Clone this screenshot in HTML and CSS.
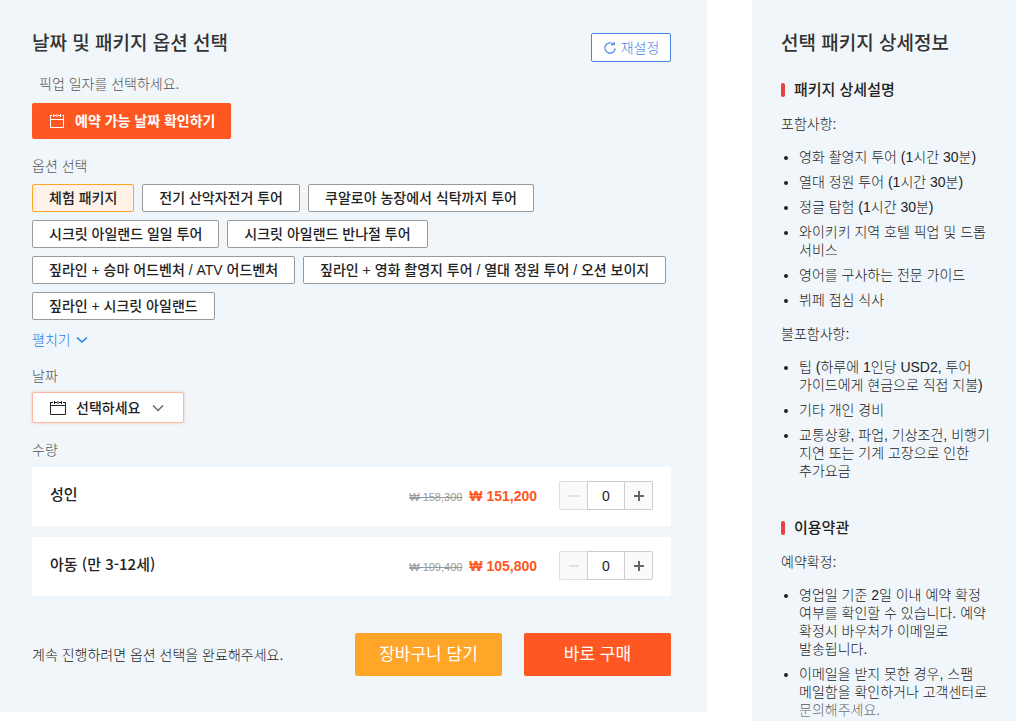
FILE: index.html
```html
<!DOCTYPE html>
<html lang="ko">
<head>
    <meta charset="UTF-8">
    <meta name="viewport" content="width=device-width, initial-scale=1.0">
    <title>날짜 및 패키지 옵션 선택</title>
    <link rel="stylesheet" href="styles.css">
</head>
<body>

    <div class="page">
        <!-- Booking options -->
        <main class="booking">
            <div class="booking-header">
                <h2 class="title">날짜 및 패키지 옵션 선택</h2>
                <button type="button" class="reset-btn">
                    <svg width="14" height="14" viewBox="0 0 14 14" fill="none" stroke="currentColor" stroke-width="1.2">
                        <path d="M10.6 3.2A5.2 5.2 0 1 0 12.2 7.4"/>
                        <path d="M8 3.6H11.2V1"/>
                    </svg>
                    재설정
                </button>
            </div>

            <p class="hint">픽업 일자를 선택하세요.</p>
            <button type="button" class="check-btn">
                <svg width="16" height="16" viewBox="0 0 16 16" fill="none" stroke="currentColor">
                    <path d="M1.5 2V14.5H14.5V2M1.5 6.5H14.5M1 2.5H3M5 2.5H7M9 2.5H11M13 2.5H15M4.5 1V4M8 1V4M11.5 1V4"/>
                </svg>
                예약 가능 날짜 확인하기
            </button>

            <h3 class="label">옵션 선택</h3>
            <div class="options">
                <button type="button" class="option selected">체험 패키지</button>
                <button type="button" class="option">전기 산악자전거 투어</button>
                <button type="button" class="option">쿠알로아 농장에서 식탁까지 투어</button>
                <button type="button" class="option">시크릿 아일랜드 일일 투어</button>
                <button type="button" class="option">시크릿 아일랜드 반나절 투어</button>
                <button type="button" class="option">짚라인 + 승마 어드벤처 / ATV 어드벤처</button>
                <button type="button" class="option">짚라인 + 영화 촬영지 투어 / 열대 정원 투어 / 오션 보이지</button>
                <button type="button" class="option">짚라인 + 시크릿 아일랜드</button>
            </div>
            <button type="button" class="expand-btn">
                펼치기
                <svg width="12" height="8" viewBox="0 0 12 8" fill="none" stroke="currentColor" stroke-width="1.6">
                    <path d="M1 1.5L6 6L11 1.5"/>
                </svg>
            </button>

            <label class="label" for="date">날짜</label>
            <div class="date-box">
                <svg width="16" height="16" viewBox="0 0 16 16" fill="none" stroke="currentColor">
                    <path d="M.5 2V14.5H15.5V2M.5 5.5H15.5M0 2.5H3M5 2.5H7M9 2.5H11M13 2.5H16M4.5 1V4M8 1V4M11.5 1V4"/>
                </svg>
                <select id="date" class="date-select">
                    <option>선택하세요</option>
                </select>
                <svg class="date-arrow" width="12" height="8" viewBox="0 0 12 8" fill="none" stroke="currentColor" stroke-width="1.5">
                    <path d="M1 1.5L6 6.5L11 1.5"/>
                </svg>
            </div>

            <h3 class="label">수량</h3>
            <div class="units">
                <div class="unit">
                    <label class="unit-name" for="adult">성인</label>
                    <div class="unit-price"><s class="old">₩ 158,300</s> <span class="price">₩ 151,200</span></div>
                    <div class="counter">
                        <button type="button" class="minus" aria-label="빼기" disabled></button>
                        <input type="text" id="adult" value="0">
                        <button type="button" class="plus" aria-label="더하기"></button>
                    </div>
                </div>
                <div class="unit">
                    <label class="unit-name" for="child">아동 (만 3-12세)</label>
                    <div class="unit-price"><s class="old">₩ 109,400</s> <span class="price">₩ 105,800</span></div>
                    <div class="counter">
                        <button type="button" class="minus" aria-label="빼기" disabled></button>
                        <input type="text" id="child" value="0">
                        <button type="button" class="plus" aria-label="더하기"></button>
                    </div>
                </div>
            </div>

            <div class="booking-footer">
                <p class="notice">계속 진행하려면 옵션 선택을 완료해주세요.</p>
                <button type="button" class="buy-btn cart">장바구니 담기</button>
                <button type="button" class="buy-btn">바로 구매</button>
            </div>
        </main>

        <!-- Package details -->
        <aside class="details">
            <h2 class="title">선택 패키지 상세정보</h2>

            <h3 class="details-heading">패키지 상세설명</h3>
            <p>포함사항:</p>
            <ul>
                <li>영화 촬영지 투어 (1시간 30분)</li>
                <li>열대 정원 투어 (1시간 30분)</li>
                <li>정글 탐험 (1시간 30분)</li>
                <li>와이키키 지역 호텔 픽업 및 드롭 서비스</li>
                <li>영어를 구사하는 전문 가이드</li>
                <li>뷔페 점심 식사</li>
            </ul>
            <p>불포함사항:</p>
            <ul>
                <li>팁 (하루에 1인당 USD2, 투어 가이드에게 현금으로 직접 지불)</li>
                <li>기타 개인 경비</li>
                <li>교통상황, 파업, 기상조건, 비행기 지연 또는 기계 고장으로 인한 추가요금</li>
            </ul>

            <h3 class="details-heading terms">이용약관</h3>
            <p>예약확정:</p>
            <ul>
                <li>영업일 기준 2일 이내 예약 확정 여부를 확인할 수 있습니다. 예약 확정시 바우처가 이메일로 발송됩니다.</li>
                <li>이메일을 받지 못한 경우, 스팸 메일함을 확인하거나 고객센터로 문의해주세요.</li>
            </ul>
        </aside>
    </div>

</body>
</html>
```

FILE: styles.css
```css
* {
    box-sizing: border-box;
}

body {
    margin: 0;
    background-color: #fff;
    color: #222;
    font-family: "Liberation Sans", "Noto Sans CJK KR", sans-serif;
    font-size: 14px;
    font-weight: 300;
    line-height: 18px;
    word-break: keep-all;
}

h2, h3, p, ul {
    margin: 0;
}

button, input, select {
    font: inherit;
    color: inherit;
    margin: 0;
    padding: 0;
}

button {
    display: flex;
    align-items: center;
    justify-content: center;
    border: none;
    border-radius: 2px;
    cursor: pointer;
}

.page {
    display: grid;
    grid-template-columns: minmax(0, 1fr) 264px;
    column-gap: 45px;
    align-items: start;
}

.title {
    color: #333;
    font-size: 19px;
    font-weight: 500;
    line-height: 22px;
}

/* Booking panel */
.booking {
    padding: 33px 36px 36px 32px;
    background-color: #f0f6fa;
}

.booking-header {
    display: flex;
    justify-content: space-between;
    align-items: flex-start;
}

.reset-btn {
    gap: 4px;
    width: 80px;
    height: 29px;
    border: 1px solid #4985e6;
    background-color: #fff;
    color: #4985e6;
}

.hint {
    margin: 13px 0 10px;
    padding-left: 7px;
    color: #555;
}

.check-btn {
    gap: 10px;
    height: 36px;
    padding: 0 16px 0 17px;
    background-color: #ff5722;
    color: #fff;
    font-weight: 700;
}

.label {
    display: block;
    margin: 18px 0 7px;
    color: #555;
    font-size: 14px;
    font-weight: 300;
}

.options {
    display: flex;
    flex-wrap: wrap;
    gap: 8px;
    padding-top: 2px;
}

.option {
    height: 28px;
    padding: 0 16px;
    border: 1px solid #999;
    background-color: #fff;
    font-weight: 500;
}

.option.selected {
    border-color: #ffa628;
    background-color: #fff3e8;
}

.expand-btn {
    gap: 5px;
    margin-top: 11px;
    background: none;
    color: #2080ef;
}

.date-box {
    display: inline-flex;
    align-items: center;
    height: 31px;
    padding: 0 19px 0 17px;
    border: 1px solid #ffb9a3;
    border-radius: 2px;
    background-color: #fff;
    box-shadow: 0 0 3px rgba(255, 87, 34, 0.3);
}

.date-select {
    appearance: none;
    margin: 0 11px 0 10px;
    border: none;
    background: none;
    font-weight: 500;
}

.date-arrow {
    color: #666;
}

.units {
    display: flex;
    flex-direction: column;
    gap: 11px;
    padding-top: 1px;
}

.unit {
    display: flex;
    align-items: flex-start;
    padding: 14px 18px 16px;
    background-color: #fff;
}

.unit-name {
    flex: 1;
    padding-top: 4px;
    font-family: "Noto Sans CJK KR", sans-serif;
    font-size: 15px;
    font-weight: 500;
}

.unit-price {
    margin-right: 22px;
    padding-top: 6px;
}

.old {
    margin-right: 3px;
    color: #999;
    font-size: 11px;
}

.price {
    color: #ff5722;
    font-weight: 700;
}

.counter {
    display: flex;
    height: 29px;
}

.counter button {
    width: 28px;
    border: 1px solid #ccc;
    background-color: #fafafa;
    color: #666;
}

.counter .minus {
    border-color: #e0e0e0;
    border-right: none;
    border-radius: 2px 0 0 2px;
    color: #e0e0e0;
}

.counter .plus {
    border-left: none;
    border-radius: 0 2px 2px 0;
}

.counter button::before {
    content: "";
    width: 10px;
    height: 10px;
    background: linear-gradient(currentColor, currentColor) center / 10px 2px no-repeat;
}

.counter .plus::before {
    background:
        linear-gradient(currentColor, currentColor) center / 10px 2px no-repeat,
        linear-gradient(currentColor, currentColor) center / 2px 10px no-repeat;
}

.counter input {
    width: 38px;
    border: 1px solid #ccc;
    background-color: #fff;
    text-align: center;
}

.booking-footer {
    display: flex;
    align-items: center;
    gap: 22px;
    margin-top: 37px;
}

.notice {
    flex: 1;
}

.buy-btn {
    width: 147px;
    height: 43px;
    background-color: #ff5722;
    color: #fff;
    font-size: 17px;
    font-weight: 400;
}

.buy-btn.cart {
    background-color: #ffa628;
}

/* Details panel */
.details {
    position: relative;
    height: 100vh;
    padding: 33px 24px 0 29px;
    overflow: hidden;
    background-color: #f0f6fa;
}

/* Fades the text out at the bottom edge */
.details::after {
    content: "";
    position: absolute;
    left: 0;
    right: 0;
    bottom: 0;
    height: 20px;
    background: linear-gradient(rgba(240, 246, 250, 0.2), rgba(240, 246, 250, 0.5));
}

.details-heading {
    display: flex;
    align-items: center;
    gap: 9px;
    margin-top: 25px;
    font-size: 15px;
    font-weight: 500;
    line-height: 20px;
}

.details-heading::before {
    content: "";
    width: 4px;
    height: 14px;
    border-radius: 2px;
    background-color: #e64340;
}

.details-heading.terms {
    margin-top: 38px;
}

.details p {
    margin-top: 15px;
}

.details ul {
    margin: 15px 0 16px;
    padding-left: 18px;
}

.details li + li {
    margin-top: 7px;
}
```
